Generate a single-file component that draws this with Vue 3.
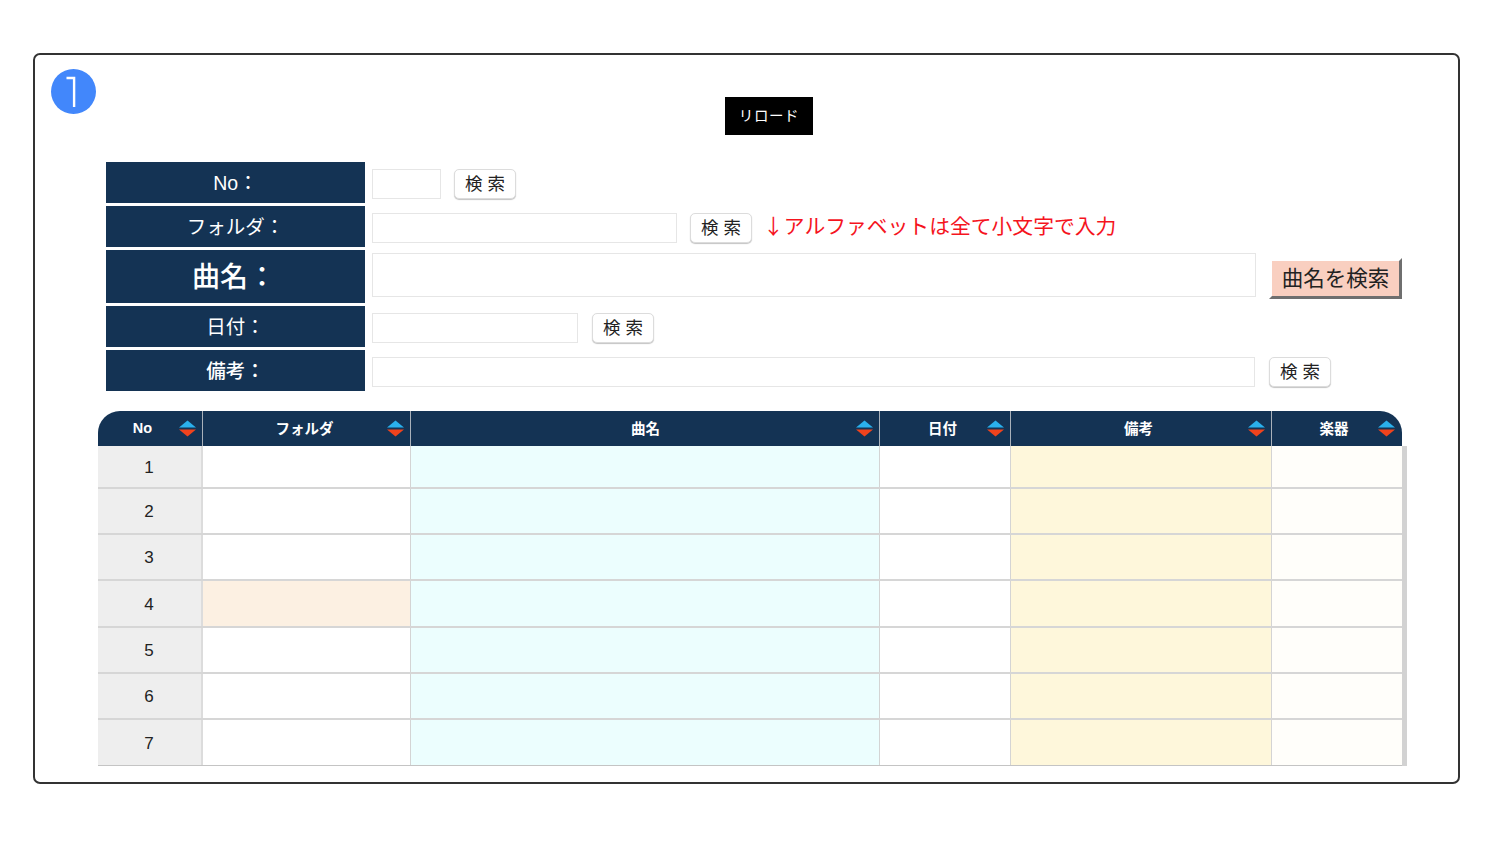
<script setup>
const columns = [
  { name: 'No', width: 105, cls: 'no', pad: 8 },
  { name: 'フォルダ', width: 208, cls: '', pad: 19 },
  { name: '曲名', width: 469, cls: 'title', pad: 24 },
  { name: '日付', width: 131, cls: '', pad: 18 },
  { name: '備考', width: 261, cls: 'memo', pad: 18 },
  { name: '楽器', width: 130, cls: 'inst', pad: 18 }
]

const rows = [
  { no: 1, height: 43 },
  { no: 2, height: 46 },
  { no: 3, height: 46 },
  { no: 4, height: 47, hit: true },
  { no: 5, height: 46 },
  { no: 6, height: 46 },
  { no: 7, height: 46 }
]

function cellClass(col, row) {
  if (row.hit && col.name === 'フォルダ') return [col.cls, 'hit']
  return [col.cls]
}
</script>

<template>
  <div class="page">
    <section class="frame">
      <div class="step">
        <svg width="45" height="45" viewBox="0 0 45 45">
          <circle cx="22.5" cy="22.5" r="22.5" fill="#4287fb" />
          <path d="M15.5 9h7.6v29" fill="none" stroke="#fff" stroke-width="2.4" />
        </svg>
      </div>

      <div class="reload-wrap">
        <button class="reload">リロード</button>
      </div>

      <div class="search">
        <div class="row">
          <div class="label">No：</div>
          <input class="input w-no" />
          <button class="btn gap-no">検 索</button>
        </div>
        <div class="row">
          <div class="label">フォルダ：</div>
          <input class="input w-folder" />
          <button class="btn gap-folder">検 索</button>
          <span class="note"><span class="arrow">↓</span>アルファベットは全て小文字で入力</span>
        </div>
        <div class="row big">
          <div class="label">曲名：</div>
          <input class="input w-title" />
          <button class="btn-title">曲名を検索</button>
        </div>
        <div class="row">
          <div class="label">日付：</div>
          <input class="input w-date" />
          <button class="btn gap-date">検 索</button>
        </div>
        <div class="row">
          <div class="label bold">備考：</div>
          <input class="input w-memo" />
          <button class="btn gap-memo">検 索</button>
        </div>
      </div>

      <div class="table">
        <div class="thead">
          <div
            v-for="col in columns"
            :key="col.name"
            class="th"
            :style="{ width: col.width + 'px' }"
          >
            <span class="th-name" :style="{ paddingLeft: col.pad + 'px' }">{{ col.name }}</span>
            <svg class="sort" width="17" height="17" viewBox="0 0 17 17">
              <path d="M8.5 0.5 17 7.5H0Z" fill="#2ab0ec" />
              <path d="M0 9.5H17L8.5 16.5Z" fill="#f0431d" />
            </svg>
          </div>
        </div>
        <div
          v-for="row in rows"
          :key="row.no"
          class="tr"
          :style="{ height: row.height + 'px' }"
        >
          <div
            v-for="col in columns"
            :key="col.name"
            class="td"
            :class="cellClass(col, row)"
            :style="{ width: col.width + 'px' }"
          >
            <template v-if="col.cls === 'no'">{{ row.no }}</template>
          </div>
        </div>
      </div>
    </section>
  </div>
</template>

<style scoped>
.page {
  width: 1500px;
  height: 847px;
  padding: 53px 0 0 33px;
  box-sizing: border-box;
  font-family: "Liberation Sans", "Noto Sans CJK JP", sans-serif;
}

.frame {
  position: relative;
  width: 1427px;
  height: 731px;
  box-sizing: border-box;
  border: 2px solid #333;
  border-radius: 7px;
  background: #fff;
  padding: 42px 0 0 63px;
}

.step {
  position: absolute;
  left: 16px;
  top: 14px;
  width: 45px;
  height: 45px;
}

.reload-wrap {
  display: flex;
  justify-content: center;
  width: 1342px;
  height: 38px;
}

.reload {
  width: 88px;
  height: 38px;
  border: none;
  padding: 0 0 3px;
  background: #000;
  color: #fff;
  font-family: inherit;
  font-size: 14.5px;
  letter-spacing: 0.6px;
}

.search {
  display: flex;
  flex-direction: column;
  gap: 3px;
  margin: 27px 0 0 8px;
}

.row {
  display: flex;
  align-items: center;
  height: 41px;
}

.row.big {
  height: 53px;
}

.label {
  flex: none;
  display: flex;
  align-items: center;
  justify-content: center;
  width: 259px;
  height: 100%;
  padding-bottom: 2px;
  box-sizing: border-box;
  background: #143354;
  color: #fff;
  font-size: 19.5px;
}

.label.bold {
  font-weight: 500;
}

.big .label {
  padding-right: 3px;
  padding-bottom: 3px;
  font-size: 28px;
  font-weight: 500;
}

.input {
  flex: none;
  height: 30px;
  margin: 2px 0 0 7px;
  padding: 0;
  box-sizing: border-box;
  border: 1px solid #e6e6e6;
  background: #fff;
}

.w-no { width: 69px; }
.w-folder { width: 305px; }
.w-date { width: 206px; }
.w-memo { width: 883px; }

.w-title {
  width: 884px;
  height: 44px;
  margin-top: -3px;
}

.btn {
  flex: none;
  width: 62px;
  height: 30px;
  margin-top: 2px;
  padding: 3px 0 0;
  border: 1px solid #dcdcdc;
  border-radius: 5px;
  background: #fff;
  box-shadow: 0 1px 1px #c4c4c4;
  color: #222;
  font-family: inherit;
  font-size: 17.5px;
  line-height: 1;
}

.gap-no { margin-left: 13px; }
.gap-folder { margin-left: 13px; }
.gap-date { margin-left: 14px; }
.gap-memo { margin-left: 14px; }

.note {
  margin: 0 0 4px 11px;
  color: #f5141e;
  font-size: 20.8px;
  white-space: nowrap;
}

.arrow {
  font-family: "Noto Sans CJK JP", sans-serif;
}

.btn-title {
  flex: none;
  width: 133px;
  height: 41px;
  margin: 3px 0 0 13px;
  padding: 0 0 3px;
  box-sizing: border-box;
  border: 3px solid;
  border-color: transparent #6f6f6f #6f6f6f transparent;
  background: #f9cfc0;
  background-clip: padding-box;
  color: #222;
  font-family: inherit;
  font-size: 21.5px;
}

.table {
  position: relative;
  width: 1310px;
  margin: 20px 0 0 0;
}

.thead {
  display: flex;
  width: 1304px;
  height: 35px;
  overflow: hidden;
  border-radius: 22px 22px 0 0;
  background: #143354;
}

.th {
  flex: none;
  display: flex;
  align-items: center;
  box-sizing: border-box;
  padding: 0 6px 0 0;
  border-right: 1px solid #a9b1ba;
  color: #fff;
  font-size: 14.5px;
  font-weight: 700;
}

.th:last-child {
  border-right: none;
  padding-right: 7px;
}

.th-name {
  flex: 1;
  padding-bottom: 2px;
  text-align: center;
  box-sizing: border-box;
}

.sort {
  flex: none;
}

.tr {
  display: flex;
  width: 1304px;
  box-sizing: border-box;
  border-bottom: 2px solid #d6d6d6;
  box-shadow: 5px 0 0 #d2d2d2;
}

.tr:last-child {
  border-bottom: 1px solid #c4c4c4;
}

.td {
  flex: none;
  box-sizing: border-box;
  border-right: 1px solid #d4d4d4;
  background: #fff;
}

.td.no {
  display: flex;
  align-items: center;
  justify-content: center;
  padding: 2px 1px 0 0;
  background: #eeeeee;
  border-right: 2px solid #dcdcdc;
  color: #222;
  font-size: 17px;
}

.td.title { background: #ecfefe; }
.td.memo { background: #fef7db; }
.td.inst { background: #fffefa; border-right: none; }
.td.hit { background: #fcf0e2; }
</style>

<style>
html, body {
  margin: 0;
  background: #fff;
}
</style>
